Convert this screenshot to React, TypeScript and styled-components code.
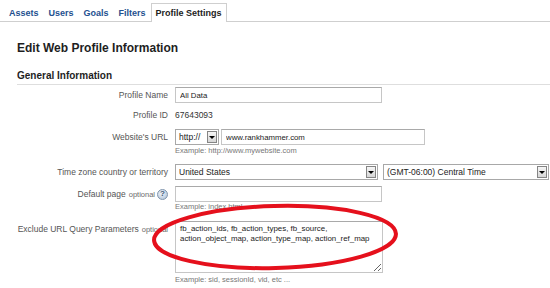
import React from "react";
import styled, { createGlobalStyle } from "styled-components";

const GlobalStyle = createGlobalStyle`
  html, body { margin: 0; padding: 0; background: #fff; }
  body { font-family: "Liberation Sans", Arial, sans-serif; color: #222; }
  * { box-sizing: border-box; }
`;

const Page = styled.div`
  position: relative;
  width: 550px;
  height: 288px;
  overflow: hidden;
  background: #fff;
`;

const TabBar = styled.nav`
  display: flex;
  align-items: flex-end;
  height: 22px;
  padding-left: 4px;
  border-bottom: 1px solid #cfcfcf;
`;

const Tab = styled.div<{ $active?: boolean }>`
  height: 19px;
  margin-bottom: -1px;
  padding: 0 4px;
  border: 1px solid ${(p) => (p.$active ? "#cfcfcf" : "transparent")};
  border-bottom: 0;
  background: ${(p) => (p.$active ? "#fff" : "transparent")};
  font-size: 9px;
  font-weight: bold;
  line-height: 18px;
  color: ${(p) => (p.$active ? "#222" : "#24508f")};
  white-space: nowrap;
`;

const Content = styled.main`
  padding-left: 17px;
`;

const Title = styled.h1`
  margin: 19px 0 0;
  font-size: 12px;
  line-height: 14px;
  font-weight: bold;
  color: #1e1e1e;
`;

const Section = styled.h2`
  margin: 15px 0 0;
  padding-bottom: 2px;
  font-size: 10px;
  line-height: 12px;
  font-weight: bold;
  color: #1e1e1e;
  border-bottom: 1px solid #dedede;
`;

const Form = styled.div`
  margin-top: 2px;
`;

const Row = styled.div<{ $mt: number }>`
  display: grid;
  grid-template-columns: 151px 1fr;
  column-gap: 7px;
  align-items: start;
  margin-top: ${(p) => p.$mt}px;
`;

const Label = styled.div`
  display: flex;
  justify-content: flex-end;
  align-items: center;
  height: 16px;
  font-size: 8.5px;
  color: #555;
  white-space: nowrap;
`;

const Optional = styled.span`
  margin-left: 3px;
  font-size: 7.5px;
  color: #6a6a6a;
`;

const Help = styled.span`
  display: inline-flex;
  align-items: center;
  justify-content: center;
  width: 11px;
  height: 11px;
  margin-left: 2px;
  border-radius: 50%;
  border: 1px solid #7f95ad;
  background: radial-gradient(circle at 40% 35%, #f2f6fb, #a9bdd4);
  font-size: 8px;
  font-weight: bold;
  color: #3f5874;
  line-height: 1;
`;

const Control = styled.div`
  display: flex;
  flex-direction: column;
  align-items: flex-start;
`;

const Line = styled.div<{ $gap: number }>`
  display: flex;
  gap: ${(p) => p.$gap}px;
`;

const TextInput = styled.input<{ $w: number }>`
  width: ${(p) => p.$w}px;
  height: 16px;
  margin: 0;
  padding: 0 4px;
  border: 1px solid #c6c6c6;
  border-top-color: #a9a9a9;
  border-radius: 0;
  font-family: "Liberation Sans", Arial, sans-serif;
  font-size: 7.8px;
  color: #222;
  background: #fff;
  outline: none;
`;

const Value = styled.div`
  font-size: 8.5px;
  line-height: 16px;
  color: #333;
`;

const SelectBox = styled.div<{ $w: number }>`
  display: flex;
  align-items: center;
  justify-content: space-between;
  width: ${(p) => p.$w}px;
  height: 16px;
  padding-left: 3px;
  border: 1px solid #a8a8a8;
  background: #fff;
  font-size: 8.5px;
  color: #222;
  white-space: nowrap;
`;

const ArrowBox = styled.span`
  display: flex;
  align-items: center;
  justify-content: center;
  width: 10px;
  height: 12px;
  margin-right: 1px;
  border: 1px solid #858585;
  background: linear-gradient(#f6f6f6, #d6d6d6);

  &::after {
    content: "";
    border-left: 3px solid transparent;
    border-right: 3px solid transparent;
    border-top: 3px solid #000;
  }
`;

const TextArea = styled.textarea`
  width: 208px;
  height: 52px;
  margin: 0;
  padding: 2px 4px;
  border: 1px solid #c6c6c6;
  border-top-color: #a9a9a9;
  border-radius: 0;
  font-family: "Liberation Sans", Arial, sans-serif;
  font-size: 7.9px;
  line-height: 10px;
  color: #222;
  background: #fff;
  overflow: hidden;
  resize: both;
  outline: none;
`;

const Hint = styled.div<{ $mt: number }>`
  margin-top: ${(p) => p.$mt}px;
  font-size: 7.5px;
  line-height: 10px;
  color: #777;
  white-space: nowrap;
`;

const Overlay = styled.svg`
  position: absolute;
  left: 150px;
  top: 200px;
  pointer-events: none;
`;

const Select = ({ w, text }: { w: number; text: string }) => (
  <SelectBox $w={w}>
    <span>{text}</span>
    <ArrowBox />
  </SelectBox>
);

export default function App() {
  return (
    <Page>
      <GlobalStyle />
      <TabBar>
        <Tab>Assets</Tab>
        <Tab>Users</Tab>
        <Tab>Goals</Tab>
        <Tab>Filters</Tab>
        <Tab $active>Profile Settings</Tab>
      </TabBar>
      <Content>
        <Title>Edit Web Profile Information</Title>
        <Section>General Information</Section>
        <Form>
          <Row $mt={0}>
            <Label>Profile Name</Label>
            <TextInput $w={207} readOnly value="All Data" />
          </Row>
          <Row $mt={4}>
            <Label>Profile ID</Label>
            <Value>67643093</Value>
          </Row>
          <Row $mt={6}>
            <Label>Website's URL</Label>
            <Control>
              <Line $gap={2}>
                <Select w={44} text="http://" />
                <TextInput $w={204} readOnly value="www.rankhammer.com" />
              </Line>
              <Hint $mt={1}>Example: http://www.mywebsite.com</Hint>
            </Control>
          </Row>
          <Row $mt={8}>
            <Label>Time zone country or territory</Label>
            <Line $gap={5}>
              <Select w={203} text="United States" />
              <Select w={166} text="(GMT-06:00) Central Time" />
            </Line>
          </Row>
          <Row $mt={6}>
            <Label>
              Default page<Optional>optional</Optional>
              <Help>?</Help>
            </Label>
            <Control>
              <TextInput $w={207} readOnly value="" />
              <Hint $mt={0}>Example: index.html</Hint>
            </Control>
          </Row>
          <Row $mt={9}>
            <Label>
              Exclude URL Query Parameters<Optional>optional</Optional>
            </Label>
            <Control>
              <TextArea
                readOnly
                value={"fb_action_ids, fb_action_types, fb_source,\naction_object_map, action_type_map, action_ref_map"}
              />
              <Hint $mt={2}>Example: sid, sessionId, vid, etc ...</Hint>
            </Control>
          </Row>
        </Form>
      </Content>
      <Overlay width="252" height="74" viewBox="0 0 252 74">
        <ellipse
          cx="125"
          cy="37"
          rx="121"
          ry="31"
          fill="none"
          stroke="#e5101c"
          strokeWidth="4"
          transform="rotate(-1.5 125 37)"
        />
      </Overlay>
    </Page>
  );
}
